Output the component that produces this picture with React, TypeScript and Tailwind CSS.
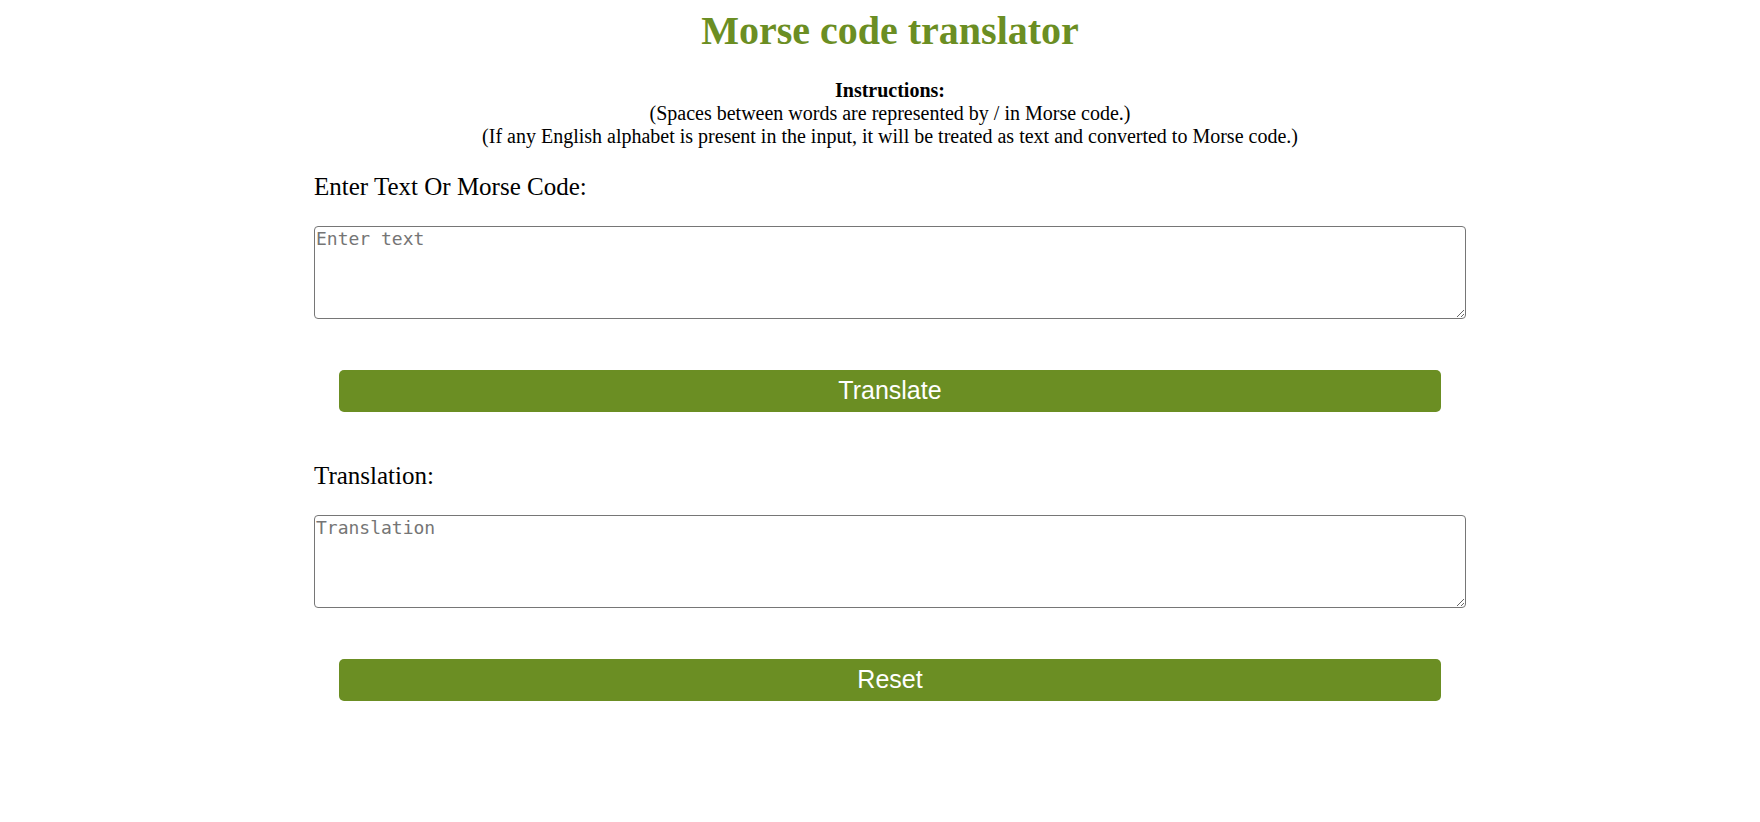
import { useState } from "react";

const MORSE: Record<string, string> = {
  A: ".-", B: "-...", C: "-.-.", D: "-..", E: ".", F: "..-.", G: "--.", H: "....",
  I: "..", J: ".---", K: "-.-", L: ".-..", M: "--", N: "-.", O: "---", P: ".--.",
  Q: "--.-", R: ".-.", S: "...", T: "-", U: "..-", V: "...-", W: ".--", X: "-..-",
  Y: "-.--", Z: "--..", "0": "-----", "1": ".----", "2": "..---", "3": "...--",
  "4": "....-", "5": ".....", "6": "-....", "7": "--...", "8": "---..", "9": "----.",
};

const REVERSE = Object.fromEntries(Object.entries(MORSE).map(([k, v]) => [v, k]));

function translate(input: string) {
  if (/[a-z]/i.test(input)) {
    return input
      .toUpperCase()
      .split(" ")
      .map((w) => w.split("").map((c) => MORSE[c] ?? "").join(" "))
      .join(" / ");
  }
  return input
    .trim()
    .split("/")
    .map((w) => w.trim().split(/\s+/).map((c) => REVERSE[c] ?? "").join(""))
    .join(" ");
}

export default function App() {
  const [text, setText] = useState("");
  const [result, setResult] = useState("");

  const serif = "font-['Liberation_Serif','Times_New_Roman',serif]";
  const area =
    "block w-full h-[93px] mt-[25px] border border-[#767676] rounded-[4px] p-px font-['DejaVu_Sans_Mono',monospace] text-[18px] leading-[22px] text-black placeholder:text-[#757575] bg-white";
  const button =
    "block w-[1102px] mx-auto h-[42px] rounded-[5px] bg-[#6b8e23] text-white text-[25px] font-['Liberation_Sans',Arial,sans-serif] cursor-pointer";

  return (
    <div className={`min-h-screen bg-white pl-[20px] ${serif}`}>
      <h1 className="pt-[8px] text-center text-[40px] leading-[46px] font-bold text-[#6b8e23]">
        Morse code translator
      </h1>

      <div className="mt-[25px] text-center text-[20px] leading-[23px] text-black">
        <p className="font-bold">Instructions:</p>
        <p>(Spaces between words are represented by / in Morse code.)</p>
        <p>
          (If any English alphabet is present in the input, it will be treated as text and
          converted to Morse code.)
        </p>
      </div>

      <div className="w-[1152px] mx-auto">
        <label className="block mt-[25px] text-[25px] leading-[28px] text-black">
          Enter Text Or Morse Code:
        </label>
        <textarea
          className={area}
          placeholder="Enter text"
          value={text}
          onChange={(e) => setText(e.target.value)}
        />
        <div className="mt-[51px]">
          <button className={button} onClick={() => setResult(translate(text))}>
            Translate
          </button>
        </div>

        <label className="block mt-[50px] text-[25px] leading-[28px] text-black">
          Translation:
        </label>
        <textarea className={area} placeholder="Translation" value={result} readOnly />
        <div className="mt-[51px]">
          <button
            className={button}
            onClick={() => {
              setText("");
              setResult("");
            }}
          >
            Reset
          </button>
        </div>
      </div>
    </div>
  );
}
